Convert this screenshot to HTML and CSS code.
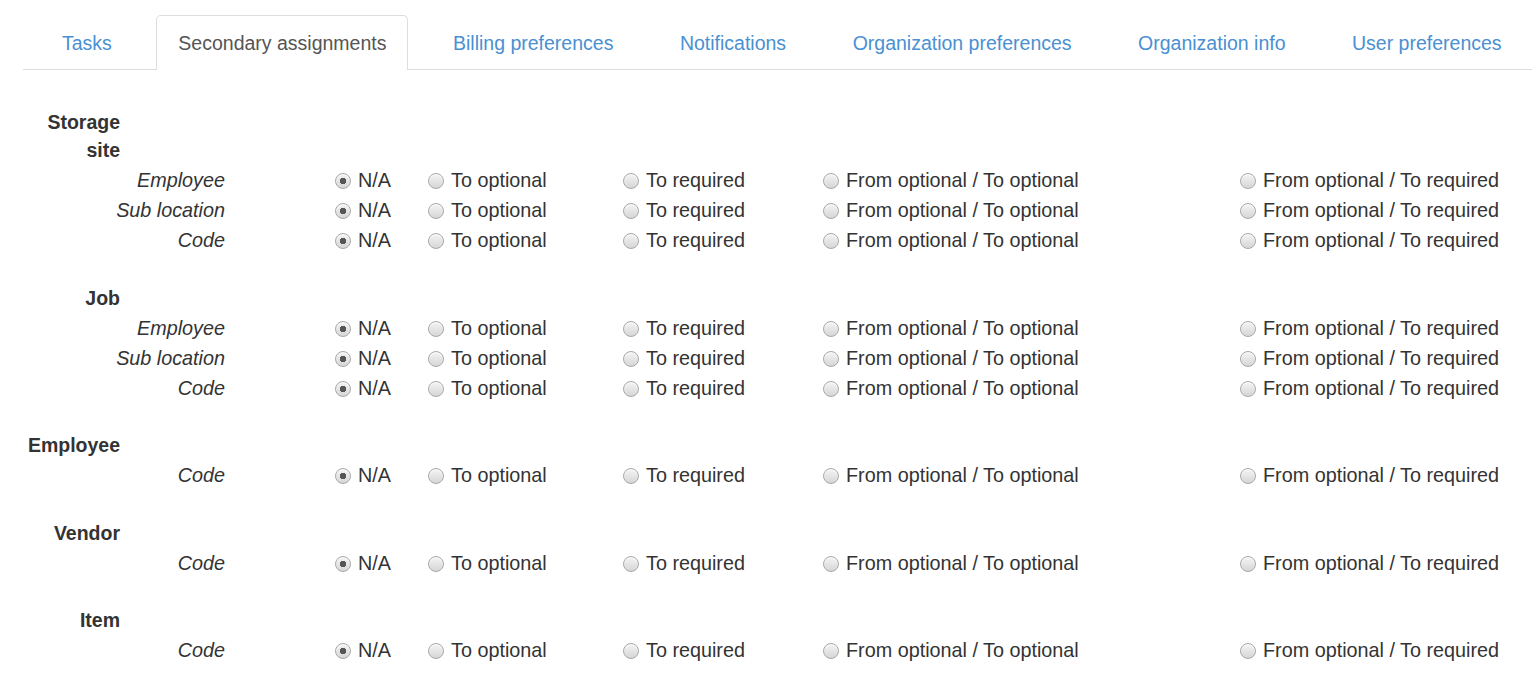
FILE: index.html
```html
<!DOCTYPE html>
<html lang="en">
<head>
<meta charset="utf-8">
<title>Secondary assignments</title>
<link rel="stylesheet" href="styles.css">
</head>
<body>
<div class="page">
  <ul class="tabs">
    <li class="tab"><a href="#">Tasks</a></li>
    <li class="tab active"><a href="#">Secondary assignments</a></li>
    <li class="tab"><a href="#">Billing preferences</a></li>
    <li class="tab"><a href="#">Notifications</a></li>
    <li class="tab"><a href="#">Organization preferences</a></li>
    <li class="tab"><a href="#">Organization info</a></li>
    <li class="tab"><a href="#">User preferences</a></li>
  </ul>

  <div class="content">
    <section class="group">
      <h3 class="group-title">Storage site</h3>
      <div class="row">
        <span class="field">Employee</span>
        <label class="opt"><input type="radio" name="ss-emp" checked><span>N/A</span></label>
        <label class="opt"><input type="radio" name="ss-emp"><span>To optional</span></label>
        <label class="opt"><input type="radio" name="ss-emp"><span>To required</span></label>
        <label class="opt"><input type="radio" name="ss-emp"><span>From optional / To optional</span></label>
        <label class="opt"><input type="radio" name="ss-emp"><span>From optional / To required</span></label>
      </div>
      <div class="row">
        <span class="field">Sub location</span>
        <label class="opt"><input type="radio" name="ss-sub" checked><span>N/A</span></label>
        <label class="opt"><input type="radio" name="ss-sub"><span>To optional</span></label>
        <label class="opt"><input type="radio" name="ss-sub"><span>To required</span></label>
        <label class="opt"><input type="radio" name="ss-sub"><span>From optional / To optional</span></label>
        <label class="opt"><input type="radio" name="ss-sub"><span>From optional / To required</span></label>
      </div>
      <div class="row">
        <span class="field">Code</span>
        <label class="opt"><input type="radio" name="ss-code" checked><span>N/A</span></label>
        <label class="opt"><input type="radio" name="ss-code"><span>To optional</span></label>
        <label class="opt"><input type="radio" name="ss-code"><span>To required</span></label>
        <label class="opt"><input type="radio" name="ss-code"><span>From optional / To optional</span></label>
        <label class="opt"><input type="radio" name="ss-code"><span>From optional / To required</span></label>
      </div>
    </section>

    <section class="group">
      <h3 class="group-title">Job</h3>
      <div class="row">
        <span class="field">Employee</span>
        <label class="opt"><input type="radio" name="job-emp" checked><span>N/A</span></label>
        <label class="opt"><input type="radio" name="job-emp"><span>To optional</span></label>
        <label class="opt"><input type="radio" name="job-emp"><span>To required</span></label>
        <label class="opt"><input type="radio" name="job-emp"><span>From optional / To optional</span></label>
        <label class="opt"><input type="radio" name="job-emp"><span>From optional / To required</span></label>
      </div>
      <div class="row">
        <span class="field">Sub location</span>
        <label class="opt"><input type="radio" name="job-sub" checked><span>N/A</span></label>
        <label class="opt"><input type="radio" name="job-sub"><span>To optional</span></label>
        <label class="opt"><input type="radio" name="job-sub"><span>To required</span></label>
        <label class="opt"><input type="radio" name="job-sub"><span>From optional / To optional</span></label>
        <label class="opt"><input type="radio" name="job-sub"><span>From optional / To required</span></label>
      </div>
      <div class="row">
        <span class="field">Code</span>
        <label class="opt"><input type="radio" name="job-code" checked><span>N/A</span></label>
        <label class="opt"><input type="radio" name="job-code"><span>To optional</span></label>
        <label class="opt"><input type="radio" name="job-code"><span>To required</span></label>
        <label class="opt"><input type="radio" name="job-code"><span>From optional / To optional</span></label>
        <label class="opt"><input type="radio" name="job-code"><span>From optional / To required</span></label>
      </div>
    </section>

    <section class="group">
      <h3 class="group-title">Employee</h3>
      <div class="row">
        <span class="field">Code</span>
        <label class="opt"><input type="radio" name="emp-code" checked><span>N/A</span></label>
        <label class="opt"><input type="radio" name="emp-code"><span>To optional</span></label>
        <label class="opt"><input type="radio" name="emp-code"><span>To required</span></label>
        <label class="opt"><input type="radio" name="emp-code"><span>From optional / To optional</span></label>
        <label class="opt"><input type="radio" name="emp-code"><span>From optional / To required</span></label>
      </div>
    </section>

    <section class="group">
      <h3 class="group-title">Vendor</h3>
      <div class="row">
        <span class="field">Code</span>
        <label class="opt"><input type="radio" name="ven-code" checked><span>N/A</span></label>
        <label class="opt"><input type="radio" name="ven-code"><span>To optional</span></label>
        <label class="opt"><input type="radio" name="ven-code"><span>To required</span></label>
        <label class="opt"><input type="radio" name="ven-code"><span>From optional / To optional</span></label>
        <label class="opt"><input type="radio" name="ven-code"><span>From optional / To required</span></label>
      </div>
    </section>

    <section class="group">
      <h3 class="group-title">Item</h3>
      <div class="row">
        <span class="field">Code</span>
        <label class="opt"><input type="radio" name="item-code" checked><span>N/A</span></label>
        <label class="opt"><input type="radio" name="item-code"><span>To optional</span></label>
        <label class="opt"><input type="radio" name="item-code"><span>To required</span></label>
        <label class="opt"><input type="radio" name="item-code"><span>From optional / To optional</span></label>
        <label class="opt"><input type="radio" name="item-code"><span>From optional / To required</span></label>
      </div>
    </section>
  </div>
</div>
</body>
</html>
```

FILE: styles.css
```css
html, body {
  margin: 0;
  padding: 0;
  background: #fff;
}

body {
  font-family: "Liberation Sans", Arial, sans-serif;
  font-size: 19.8px;
  color: #333;
}

.page {
  padding: 15px 0 0 23px;
}

.tabs {
  list-style: none;
  margin: 0;
  padding: 0 0 0 17px;
  display: flex;
  gap: 22.5px;
  border-bottom: 1px solid #ddd;
  font-size: 19.5px;
}

.tab {
  margin-bottom: -1px;
}

.tab a {
  display: block;
  padding: 13px 21px 12px;
  line-height: 28px;
  color: #4a90d2;
  text-decoration: none;
  border: 1px solid transparent;
  border-bottom: none;
  border-radius: 5px 5px 0 0;
  white-space: nowrap;
}

.tab.active a {
  color: #555;
  background: #fff;
  border-color: #ddd;
  padding-bottom: 13px;
}

.content {
  padding-top: 38px;
}

.group {
  margin-bottom: 28.5px;
}

.group-title {
  width: 97px;
  margin: 0 0 1px;
  font-size: 19.5px;
  font-weight: bold;
  line-height: 28px;
  text-align: right;
  color: #333;
}

.row {
  display: grid;
  grid-template-columns: 312px 93px 195px 200px 417px auto;
  align-items: center;
  height: 30px;
  line-height: 30px;
}

.field {
  font-style: italic;
  text-align: right;
  padding-right: 110px;
}

.opt {
  display: flex;
  align-items: center;
  gap: 7px;
  white-space: nowrap;
}

.opt input {
  -webkit-appearance: none;
  appearance: none;
  margin: 0;
  width: 16px;
  height: 16px;
  border-radius: 50%;
  border: 1px solid #a8a8a8;
  background: linear-gradient(#f4f4f4, #d6d6d6);
  box-shadow: inset 0 1px 1px rgba(255,255,255,0.8);
  flex: none;
  position: relative;
  top: 1px;
}

.opt input:checked {
  background: radial-gradient(circle, #555 0, #555 3px, transparent 3.5px), linear-gradient(#f4f4f4, #d6d6d6);
}
```
